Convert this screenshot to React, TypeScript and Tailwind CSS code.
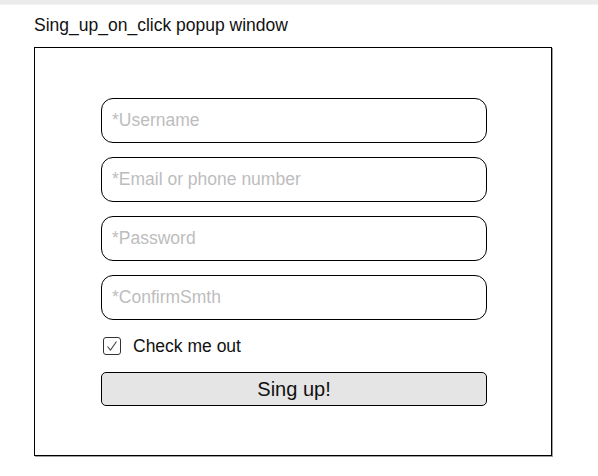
import React from "react";

const font = { fontFamily: '"Liberation Sans", Arial, sans-serif' };

function Field({ label }: { label: string }) {
  return (
    <div className="flex h-[45px] w-[386px] items-center rounded-[12px] border border-black bg-white pb-[1px] pl-[10px] text-[17.5px] text-[#bdbdbd]">
      {label}
    </div>
  );
}

export default function App() {
  return (
    <div className="h-[476px] w-[598px] bg-white text-black" style={font}>
      <div className="h-[5px] w-full border-b border-[#f3f3f3] bg-[#ebebeb]" />
      <div className="ml-[34px] mt-[10px] h-[20px] text-[17.5px] leading-[20px] text-[#111]">
        Sing_up_on_click popup window
      </div>
      <div className="ml-[34px] mt-[12px] h-[409px] w-[518px] border border-black shadow-[1px_1px_0_#a0a0a0]">
        <div className="flex flex-col pl-[66px] pt-[50px]">
          <div className="flex flex-col gap-[14px]">
            <Field label="*Username" />
            <Field label="*Email or phone number" />
            <Field label="*Password" />
            <Field label="*ConfirmSmth" />
          </div>
          <div className="mt-[17px] flex h-[18px] items-center">
            <div className="ml-[2px] flex h-[18px] w-[18px] items-center justify-center rounded-[3px] border border-[#333]">
              <svg width="14" height="14" viewBox="0 0 14 14" fill="none">
                <path d="M2.5 7.5 L5.5 11 L11.5 2.5" stroke="#444" strokeWidth="1.1" />
              </svg>
            </div>
            <span className="ml-[12px] text-[17.5px] leading-[20px] text-[#111]">Check me out</span>
          </div>
          <div className="mt-[17px] flex h-[34px] w-[386px] items-center justify-center rounded-[5px] border border-black bg-[#e5e5e5] text-[20px] text-[#111]">
            Sing up!
          </div>
        </div>
      </div>
    </div>
  );
}
